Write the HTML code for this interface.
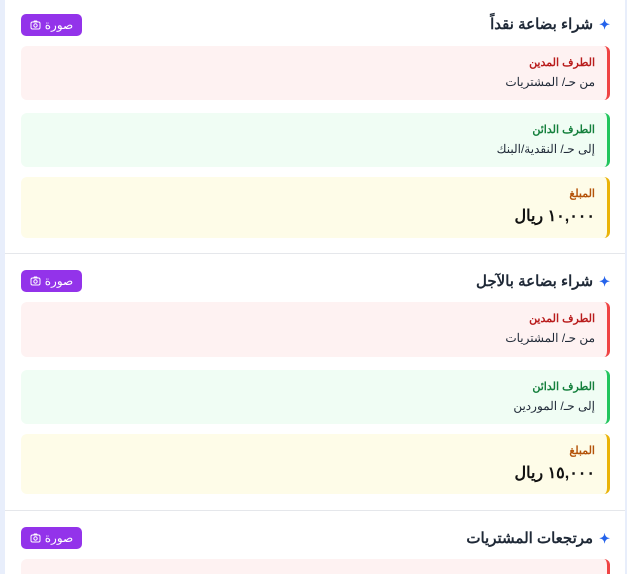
<!DOCTYPE html><html style="margin:0;width:627px;height:574px;overflow:hidden;background:#e8eefb"><head><meta charset="utf-8"><style>
body{margin:0;width:627px;height:574px;overflow:hidden;background:#e8eefb;font-family:"Liberation Sans","Noto Sans CJK SC",sans-serif;position:relative}
.wrap{position:absolute;left:5px;top:0;width:620px;height:574px;background:#fff;overflow:hidden}
.sec{position:absolute;left:0;width:620px;height:257px}
.btn{position:absolute;left:16px;width:61px;height:22px;background:#9333ea;border-radius:5px;color:#fff;font-size:12px;display:flex;align-items:center;justify-content:center;gap:4px}
.title{position:absolute;right:15px;font-size:15px;font-weight:bold;color:#1f2937;direction:rtl}
.title span{color:#2563eb;margin-left:6px;font-size:13px}
.card{position:absolute;left:16px;width:589px;border-radius:6px;direction:rtl;box-sizing:border-box;padding-right:12px}
.l{font-size:11px;font-weight:bold}
.v{font-size:12px;color:#1f2937;margin-top:6px}
.a{font-size:16px;font-weight:bold;color:#111;margin-top:6px}
.r{background:#fef2f2;border-right:3px solid #ef4444}.r .l{color:#b91c1c}
.g{background:#f0fdf4;border-right:3px solid #22c55e}.g .l{color:#15803d}
.y{background:#fefce8;border-right:3px solid #eab308}.y .l{color:#b45309}
.hr{position:absolute;left:0;width:620px;height:1px;background:#e5e7eb}
</style></head><body><div class="wrap">
<div class="sec" style="top:0">
<div class="btn" style="top:14px"><svg width="11" height="10" viewBox="0 0 11 10"><rect x="1" y="2" width="9" height="7" rx="1.5" fill="none" stroke="#fff"/><circle cx="5.5" cy="5.5" r="1.7" fill="none" stroke="#fff"/><path d="M3.5 2L4.3 1H6.7L7.5 2" stroke="#fff" fill="none"/></svg>صورة</div>
<div class="title" style="top:15px"><span>✦</span>شراء بضاعة نقداً</div>
<div class="card r" style="top:46px;height:54px;padding-top:10px"><div class="l">الطرف المدين</div><div class="v">من حـ/ المشتريات</div></div>
<div class="card g" style="top:113px;height:54px;padding-top:10px"><div class="l">الطرف الدائن</div><div class="v">إلى حـ/ النقدية/البنك</div></div>
<div class="card y" style="top:177px;height:61px;padding-top:10px"><div class="l">المبلغ</div><div class="a">١٠,٠٠٠ ريال</div></div>
</div>
<div class="hr" style="top:253px"></div>
<div class="sec" style="top:256px">
<div class="btn" style="top:14px"><svg width="11" height="10" viewBox="0 0 11 10"><rect x="1" y="2" width="9" height="7" rx="1.5" fill="none" stroke="#fff"/><circle cx="5.5" cy="5.5" r="1.7" fill="none" stroke="#fff"/><path d="M3.5 2L4.3 1H6.7L7.5 2" stroke="#fff" fill="none"/></svg>صورة</div>
<div class="title" style="top:16px"><span>✦</span>شراء بضاعة بالآجل</div>
<div class="card r" style="top:46px;height:55px;padding-top:10px"><div class="l">الطرف المدين</div><div class="v">من حـ/ المشتريات</div></div>
<div class="card g" style="top:114px;height:54px;padding-top:10px"><div class="l">الطرف الدائن</div><div class="v">إلى حـ/ الموردين</div></div>
<div class="card y" style="top:178px;height:60px;padding-top:10px"><div class="l">المبلغ</div><div class="a">١٥,٠٠٠ ريال</div></div>
</div>
<div class="hr" style="top:510px"></div>
<div class="sec" style="top:513px;height:61px;overflow:hidden">
<div class="btn" style="top:14px"><svg width="11" height="10" viewBox="0 0 11 10"><rect x="1" y="2" width="9" height="7" rx="1.5" fill="none" stroke="#fff"/><circle cx="5.5" cy="5.5" r="1.7" fill="none" stroke="#fff"/><path d="M3.5 2L4.3 1H6.7L7.5 2" stroke="#fff" fill="none"/></svg>صورة</div>
<div class="title" style="top:16px"><span>✦</span>مرتجعات المشتريات</div>
<div class="card r" style="top:46px;height:15px;padding-top:10px;border-radius:6px 6px 0 0"></div>
</div>
</div></body></html>
